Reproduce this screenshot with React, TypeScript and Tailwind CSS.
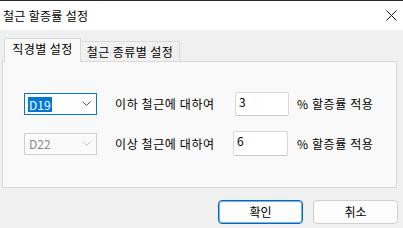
import React from "react";

const font = { fontFamily: '"Noto Sans CJK KR", "Noto Sans", sans-serif' };

function Chevron({ disabled }: { disabled?: boolean }) {
  return (
    <svg width="9" height="6" viewBox="0 0 9 6" className="shrink-0">
      <path
        d="M0.5 0.5 L4.5 4.5 L8.5 0.5"
        fill="none"
        stroke={disabled ? "#c4c4c4" : "#555"}
        strokeWidth="1"
      />
    </svg>
  );
}

export default function App() {
  return (
    <div
      className="w-[403px] h-[228px] bg-[#f0f0f0] flex flex-col border-t border-[#2b2b2b] text-black overflow-hidden"
      style={font}
    >
      {/* title bar */}
      <div className="h-[29px] bg-white flex items-center justify-between pl-[3px] pr-[6px] shrink-0">
        <span className="text-[12px] leading-none tracking-[0.3px]">철근 할증률 설정</span>
        <svg width="11" height="11" viewBox="0 0 11 11">
          <path d="M0.5 0.5 L10.5 10.5 M10.5 0.5 L0.5 10.5" stroke="#111" strokeWidth="1" />
        </svg>
      </div>

      {/* tabs */}
      <div className="flex items-end pl-[4px] pt-[7px] h-[31px] shrink-0">
        <div className="h-[24px] w-[77px] bg-[#f9f9f9] border border-b-0 border-[#d9d9d9] flex items-center justify-center text-[12px] tracking-[0.4px] relative z-10 -mb-px pb-[3px]">
          직경별 설정
        </div>
        <div className="h-[20px] w-[99px] bg-[#f0f0f0] border border-l-0 border-b-0 border-[#d9d9d9] flex items-center justify-center text-[12px] tracking-[0.4px]">
          철근 종류별 설정
        </div>
      </div>

      {/* panel */}
      <div className="ml-[2px] w-[395px] h-[127px] bg-[#f9f9f9] border border-[#d9d9d9] flex flex-col pt-[30px] gap-[15px] pl-[21px] shrink-0">
        <div className="flex items-center h-[24px]">
          <div className="w-[73px] h-[22px] border border-[#0078d7] bg-white flex items-center justify-between pl-[3px] pr-[5px]">
            <span className="bg-[#0078d7] text-white text-[12px] leading-[15px] px-[1px]">D19</span>
            <Chevron />
          </div>
          <span className="ml-[18px] text-[12px] tracking-[0.6px] w-[120px]">이하 철근에 대하여</span>
          <div className="w-[54px] h-[24px] border border-[#d9d9d9] border-b-[#c8c8c8] bg-white rounded-[2px] text-[12px] pl-[3px] pt-[1px] leading-[16px]">
            3
          </div>
          <span className="ml-[8px] text-[12px] tracking-[0.6px]">% 할증률 적용</span>
        </div>
        <div className="flex items-center h-[25px]">
          <div className="w-[73px] h-[22px] border border-[#cfcfcf] bg-[#fafafa] flex items-center justify-between pl-[4px] pr-[5px]">
            <span className="text-[#8a8a8a] text-[12px] leading-none">D22</span>
            <Chevron disabled />
          </div>
          <span className="ml-[18px] text-[12px] tracking-[0.6px] w-[118px]">이상 철근에 대하여</span>
          <div className="w-[55px] h-[25px] border border-[#d9d9d9] border-b-[#c8c8c8] bg-white rounded-[2px] text-[12px] pl-[3px] pt-[1px] leading-[16px]">
            6
          </div>
          <span className="ml-[9px] text-[12px] tracking-[0.6px]">% 할증률 적용</span>
        </div>
      </div>

      {/* buttons */}
      <div className="flex justify-end gap-[10px] pr-[5px] pt-[12px]">
        <button className="w-[85px] h-[24px] rounded-[4px] border border-[#0067c0] shadow-[inset_0_0_0_1px_#7fb2e0] bg-[#fdfdfd] text-[12px] flex items-center justify-center">
          확인
        </button>
        <button className="w-[85px] h-[24px] rounded-[4px] border border-[#d0d0d0] bg-[#fdfdfd] text-[12px] flex items-center justify-center">
          취소
        </button>
      </div>
    </div>
  );
}
